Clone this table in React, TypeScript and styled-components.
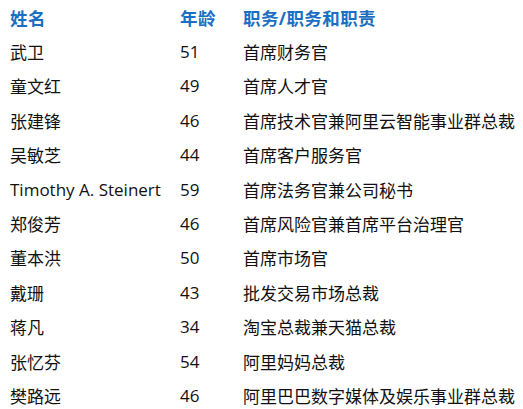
import React, { FC } from "react";
import styled, { createGlobalStyle } from "styled-components";

const GlobalStyle = createGlobalStyle`
  body {
    margin: 0;
    background: #fff;
    font-family: "Open Sans", "Noto Sans CJK SC", sans-serif;
  }
`;

const Table = styled.div`
  display: grid;
  grid-template-columns: 170px 63px auto;
  grid-auto-rows: 34.4px;
  padding-left: 10px;
  width: 523px;
  box-sizing: border-box;
`;

const Cell = styled.div<{ head?: boolean }>`
  display: flex;
  align-items: center;
  font-size: ${({ head }) => (head ? "17.5px" : "17px")};
  letter-spacing: ${({ head }) => (head ? "0.4px" : "0")};
  white-space: nowrap;
  color: ${({ head }) => (head ? "#1a6fc2" : "#111")};
  font-weight: ${({ head }) => (head ? 700 : 400)};
`;

const people: [string, number, string][] = [
  ["武卫", 51, "首席财务官"],
  ["童文红", 49, "首席人才官"],
  ["张建锋", 46, "首席技术官兼阿里云智能事业群总裁"],
  ["吴敏芝", 44, "首席客户服务官"],
  ["Timothy A. Steinert", 59, "首席法务官兼公司秘书"],
  ["郑俊芳", 46, "首席风险官兼首席平台治理官"],
  ["董本洪", 50, "首席市场官"],
  ["戴珊", 43, "批发交易市场总裁"],
  ["蒋凡", 34, "淘宝总裁兼天猫总裁"],
  ["张忆芬", 54, "阿里妈妈总裁"],
  ["樊路远", 46, "阿里巴巴数字媒体及娱乐事业群总裁"],
];

const App: FC = () => {
  return (
    <>
      <GlobalStyle />
      <Table>
        <Cell head>姓名</Cell>
        <Cell head>年龄</Cell>
        <Cell head>职务/职务和职责</Cell>
        {people.map(([name, age, role]) => (
          <React.Fragment key={name}>
            <Cell>{name}</Cell>
            <Cell>{age}</Cell>
            <Cell>{role}</Cell>
          </React.Fragment>
        ))}
      </Table>
    </>
  );
};

export default App;
